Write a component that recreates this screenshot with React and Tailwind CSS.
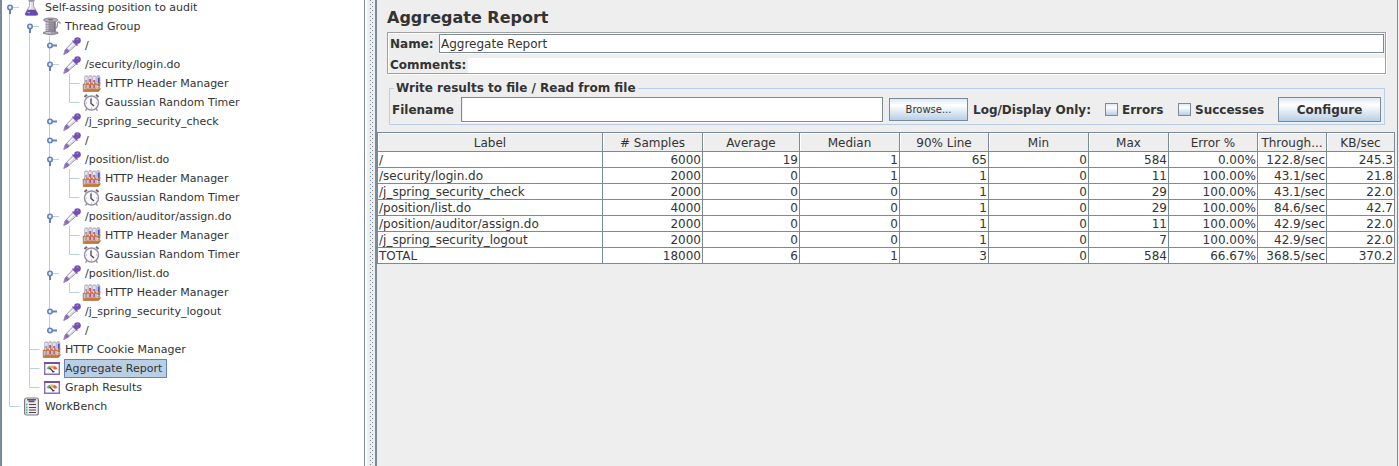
import React from "react";

function FlaskIcon() {
  return (
    <svg viewBox="0 0 20 19" className="h-[19px] w-5 shrink-0" aria-hidden="true">
      <path d="M7.500 3.500v4.500L3.300 15.500q-.6 2 1.500 2h9.400q2.100 0 1.500-2L11.500 8V3.500z" fill="#dcdbe4" stroke="#aaa5ba" />
      <path d="M5.500 11.700h8l2.300 4q.3 1.600-1.300 1.600h-10q-1.600 0-1.300-1.600z" fill="#6a49ad" />
      <path d="M6.500 2.700h6" stroke="#9894a6" strokeWidth="1.400" />
      <path d="M8.700 4v5l-1.200 2.500" stroke="#fff" fill="none" />
      <path d="M5.500 14.700h2.500" stroke="#c3b0e8" />
    </svg>
  );
}

function SpoolIcon() {
  return (
    <svg viewBox="0 0 20 19" className="h-[19px] w-5 shrink-0" aria-hidden="true">
      <path d="M13.500 11.500c3-1 1-6.500 3-6.700 1.800 0 .5 1.700 2.300 1.200" fill="none" stroke="#8f8797" strokeWidth="1.200" />
      <path d="M3.700 4.500h10v11h-10z" fill="#98919f" />
      <path d="M5.500 5v10" stroke="#c9c4ce" strokeWidth="2" />
      <path d="M12.700 5v10" stroke="#766d80" strokeWidth="1.500" />
      <path d="M3.700 7.500h10M3.700 10h10M3.700 12.500h10" stroke="#857c8e" strokeWidth=".5" />
      <ellipse cx="8.700" cy="3" rx="7.200" ry="2" fill="#b7b1bd" stroke="#837a8c" strokeWidth=".9" />
      <ellipse cx="8.700" cy="2.800" rx="2.800" ry=".7" fill="#6f6678" />
      <path d="M1.500 15.300q7.200-2.600 14.400 0v1.200q-7.200 2.600-14.400 0z" fill="#a79fae" stroke="#7b7284" strokeWidth=".8" />
      <path d="M3.500 15.800h5" stroke="#dad6de" />
    </svg>
  );
}

function DropperIcon() {
  return (
    <svg viewBox="0 0 20 19" className="h-[19px] w-5 shrink-0" aria-hidden="true">
      <path d="M11 5.500l3.500 3.300-8.800 7.700-4 2 1.300-4.500z" fill="#dddbe3" stroke="#9a92ad" strokeWidth=".9" />
      <path d="M4.800 12.300l2.900 2.700-2 1.700-4 2 1.400-4.500z" fill="#9273c9" />
      <path d="M3.800 14.300l2 1.800" stroke="#6f4fb3" />
      <path d="M11.500 7.500L6.500 12.500" stroke="#fff" strokeWidth="1.300" />
      <path d="M10.500 4.500l5 5" stroke="#7653b8" strokeWidth="1.400" />
      <circle cx="15.500" cy="4.500" r="3.300" fill="#7450b6" />
      <path d="M11.500 5.500l2.500-2.500 3 3.500-2.500 2.200z" fill="#7450b6" />
      <path d="M14.700 3.700l1.500-1" stroke="#a88bdc" strokeWidth="1.200" />
    </svg>
  );
}

function TestTubesIcon() {
  return (
    <svg viewBox="0 0 20 19" className="h-[19px] w-5 shrink-0" aria-hidden="true">
      <path d="M2.500 2.500h3.500v12H2.500zM6.500 2.500H10v12H6.500zM10.500 2.500H14v12h-3.500zM14.500 2.500H18v11h-3.500z" fill="#e3e1ea" stroke="#b3afbf" strokeWidth=".7" />
      <path d="M3.200 6h2v8h-2z" fill="#a193bd" />
      <path d="M7.200 5h2v9h-2z" fill="#d54a67" />
      <path d="M11.200 6h2v8h-2z" fill="#b2609a" />
      <path d="M15.700 3.500h2v8.500h-2z" fill="#4a55cf" />
      <path d="M3 2h2.500M7 1.700h2.500M11 2h2.500M15 1.700h2.500" stroke="#b4b1bd" />
      <path d="M2.500 8.700H19L17.200 11H.7z" fill="#cd7d3c" />
      <path d="M3.500 8v2M7.500 8v2M11.500 8v2M15 8v2" stroke="#dfd4de" strokeWidth="1.200" />
      <path d="M3 14.500h16L16.500 17.500h-16z" fill="#cd7d3c" />
      <path d="M1 17.200h15.500l2-2.500" fill="none" stroke="#a0602c" strokeWidth=".8" />
      <path d="M1.300 10v6.500M17 10.500v5" stroke="#b57040" />
    </svg>
  );
}

function ClockIcon() {
  return (
    <svg viewBox="0 0 20 19" className="h-[19px] w-5 shrink-0" aria-hidden="true">
      <path d="M2.500 4L5 1.700M14 1.700L16.500 4" stroke="#6f6b79" strokeWidth="2" />
      <path d="M5 15.500L3.500 17.700M14 15.500l1.500 2.200" stroke="#958f9f" strokeWidth="1.400" />
      <circle cx="9.500" cy="10" r="7" fill="#f9f9fb" stroke="#958ea3" strokeWidth="1.400" />
      <path d="M9.500 4.500v1M9.500 14.500v1M4 10h1M14 10h1" stroke="#aaa5b4" />
      <path d="M9 5.500v5l3 2.500" fill="none" stroke="#45434c" strokeWidth="1.300" />
    </svg>
  );
}

function GaugeIcon() {
  return (
    <svg viewBox="0 0 20 19" className="h-[19px] w-5 shrink-0" aria-hidden="true">
      <path d="M2.700 4h14.600v11.300H2.700z" fill="#fff" stroke="#8a6db9" strokeWidth="1.400" />
      <path d="M2 4h16" stroke="#7152aa" strokeWidth="2" />
      <path d="M4.500 9.500q1-2.200 3.500-2.700l1 2.500-2 1.500z" fill="#5ab573" />
      <path d="M8 6.800q2-.6 4 0l-1.500 3-1.500-.5z" fill="#f3ad58" />
      <path d="M12 6.800q2.400.6 3.500 3l-2.700 1-2-1.500z" fill="#e7653d" />
      <path d="M7.500 8.800l4 4.200" stroke="#3c3742" strokeWidth="1.200" />
      <path d="M10 12.700h2.500" stroke="#3c3742" strokeWidth="1.200" />
    </svg>
  );
}

function ClipboardIcon() {
  return (
    <svg viewBox="0 0 20 19" className="h-[19px] w-5 shrink-0" aria-hidden="true">
      <rect x="2.600" y="1" width="13.800" height="17" rx="2" fill="#eceaf0" stroke="#81788f" strokeWidth="1.200" />
      <path d="M5 2.800h9M6.500 4.500h6" stroke="#5a5663" strokeWidth="1.500" />
      <path d="M7 7.500h7M7 10.500h7M7 13h7M7 15.500h7" stroke="#4a4751" strokeWidth="1.200" />
      <path d="M4 7.500h1.500M4 10.500h1.500M4 13h1.500M4 15.500h1.500" stroke="#4fb55c" strokeWidth="1.500" />
    </svg>
  );
}

const icons = {
  flask: FlaskIcon,
  spool: SpoolIcon,
  dropper: DropperIcon,
  tubes: TestTubesIcon,
  clock: ClockIcon,
  gauge: GaugeIcon,
  clipboard: ClipboardIcon,
};

const guidePaths = {
  none: "",
  line: "M7.500 0v19",
  tee: "M7.500 0v19M7.500 9.500h10",
  elbow: "M7.500 0v9.500h10",
  openFirst: "M7.500 9v10M10 9.500h7",
  open: "M7.500 0v19M10 9.500h7",
  closed: "M7.500 0v19",
  closedLast: "M7.500 0v9",
};

function Guide({ kind }) {
  const open = kind.startsWith("open");
  const closed = kind.startsWith("closed");
  return (
    <svg viewBox="0 0 20 19" className="h-[19px] w-5 shrink-0" aria-hidden="true">
      <path d={guidePaths[kind]} fill="none" stroke="#b8cfe5" />
      {open && <path d="M8 11v5" stroke="#6382bf" strokeWidth="2" />}
      {closed && <path d="M10 9.500h5" stroke="#6382bf" strokeWidth="2" />}
      {(open || closed) && <circle cx="8" cy="9.500" r="2.200" fill="#e8f0fa" stroke="#6382bf" strokeWidth="1.600" />}
    </svg>
  );
}

const tree = [
  ["Self-assing position to audit", "flask", ["openFirst"]],
  ["Thread Group", "spool", ["line", "openFirst"]],
  ["/", "dropper", ["line", "line", "closed"]],
  ["/security/login.do", "dropper", ["line", "line", "open"]],
  ["HTTP Header Manager", "tubes", ["line", "line", "line", "tee"]],
  ["Gaussian Random Timer", "clock", ["line", "line", "line", "elbow"]],
  ["/j_spring_security_check", "dropper", ["line", "line", "closed"]],
  ["/", "dropper", ["line", "line", "closed"]],
  ["/position/list.do", "dropper", ["line", "line", "open"]],
  ["HTTP Header Manager", "tubes", ["line", "line", "line", "tee"]],
  ["Gaussian Random Timer", "clock", ["line", "line", "line", "elbow"]],
  ["/position/auditor/assign.do", "dropper", ["line", "line", "open"]],
  ["HTTP Header Manager", "tubes", ["line", "line", "line", "tee"]],
  ["Gaussian Random Timer", "clock", ["line", "line", "line", "elbow"]],
  ["/position/list.do", "dropper", ["line", "line", "open"]],
  ["HTTP Header Manager", "tubes", ["line", "line", "line", "elbow"]],
  ["/j_spring_security_logout", "dropper", ["line", "line", "closed"]],
  ["/", "dropper", ["line", "line", "closedLast"]],
  ["HTTP Cookie Manager", "tubes", ["line", "tee"]],
  ["Aggregate Report", "gauge", ["line", "tee"]],
  ["Graph Results", "gauge", ["line", "elbow"]],
  ["WorkBench", "clipboard", ["elbow"]],
];

function Tree() {
  return (
    <ul role="tree" aria-label="Test plan" className="-mt-0.5 text-[11px]">
      {tree.map(([label, icon, guides], i) => {
        const Icon = icons[icon];
        const selected = label === "Aggregate Report";
        return (
          <li key={i} role="treeitem" aria-level={guides.length} aria-selected={selected} className="flex h-[19px] items-center">
            {guides.map((kind, g) => (
              <Guide key={g} kind={kind} />
            ))}
            <Icon />
            <span
              className={
                selected
                  ? "ml-0.5 border border-[#6382bf] bg-[#b8cfe5] pr-1 leading-[17px] whitespace-nowrap"
                  : "ml-0.5 border border-transparent leading-[17px] whitespace-nowrap"
              }
            >
              {label}
            </span>
          </li>
        );
      })}
    </ul>
  );
}

const columns = [
  ["Label", "w-[225px]"],
  ["# Samples", "w-[100px]"],
  ["Average", "w-[97px]"],
  ["Median", "w-[100px]"],
  ["90% Line", "w-[89px]"],
  ["Min", "w-[100px]"],
  ["Max", "w-[80px]"],
  ["Error %", "w-[89px]"],
  ["Through...", "w-[69px]"],
  ["KB/sec", "w-[68px]"],
];

const rows = [
  ["/", "6000", "19", "1", "65", "0", "584", "0.00%", "122.8/sec", "245.3"],
  ["/security/login.do", "2000", "0", "1", "1", "0", "11", "100.00%", "43.1/sec", "21.8"],
  ["/j_spring_security_check", "2000", "0", "0", "1", "0", "29", "100.00%", "43.1/sec", "22.0"],
  ["/position/list.do", "4000", "0", "0", "1", "0", "29", "100.00%", "84.6/sec", "42.7"],
  ["/position/auditor/assign.do", "2000", "0", "0", "1", "0", "11", "100.00%", "42.9/sec", "22.0"],
  ["/j_spring_security_logout", "2000", "0", "0", "1", "0", "7", "100.00%", "42.9/sec", "22.0"],
  ["TOTAL", "18000", "6", "1", "3", "0", "584", "66.67%", "368.5/sec", "370.2"],
];

function ResultsTable() {
  return (
    <table className="w-full table-fixed border-collapse text-[12px] leading-[14px]">
      <colgroup>
        {columns.map(([name, width]) => (
          <col key={name} className={width} />
        ))}
      </colgroup>
      <thead>
        <tr>
          {columns.map(([name]) => (
            <th
              key={name}
              scope="col"
              className="h-[19px] border border-[#7a8a99] p-0 pt-0.5 font-normal whitespace-nowrap shadow-[inset_1px_1px_0_#ffffff]"
            >
              {name}
            </th>
          ))}
        </tr>
      </thead>
      <tbody className="bg-white">
        {rows.map((row) => (
          <tr key={row[0]}>
            {row.map((cell, i) => (
              <td
                key={i}
                className={
                  i === 0
                    ? "h-4 border border-[#7a8a99] p-0 pt-px pl-px whitespace-nowrap"
                    : "h-4 border border-[#7a8a99] p-0 pt-px pr-px text-right whitespace-nowrap"
                }
              >
                {cell}
              </td>
            ))}
          </tr>
        ))}
      </tbody>
    </table>
  );
}

function CheckOption({ label, className }) {
  return (
    <label className={className}>
      <input
        type="checkbox"
        className="size-[13px] shrink-0 appearance-none border border-[#7a8a99] bg-linear-to-b from-[#dde8f3] via-white via-30% to-[#b8cfe5] checked:bg-[#6382bf]"
      />
      {label}
    </label>
  );
}

export default function App() {
  return (
    <div className="flex min-h-screen bg-[#eeeeee] font-['DejaVu_Sans',sans-serif] text-[#333333]">
      <nav className="w-[365px] shrink-0 overflow-hidden border-r border-l-2 border-[#7a8a99] bg-white">
        <Tree />
      </nav>
      <div className="w-0.5 shrink-0 bg-white" />
      <div className="flex w-2 shrink-0 pl-0.5">
        <div className="w-1 bg-[conic-gradient(at_1px_1px,transparent_75%,#7a8a99_75%),conic-gradient(at_1px_1px,transparent_75%,#7a8a99_75%)] bg-size-[4px_4px] bg-position-[1px_0,3px_2px]" />
      </div>
      <main className="mr-px min-w-0 flex-1 border-r border-l-2 border-[#7a8a99]">
        <div className="pt-2 pr-[11px] pl-[10px] text-[12px] font-bold">
          <h1 className="text-[16px] leading-5">Aggregate Report</h1>
          <div className="mt-1 border border-[#a0a0a0] shadow-[1px_1px_0_#ffffff,inset_1px_1px_0_#ffffff]">
            <div className="flex items-center pt-px pr-px pl-0.5">
              <label htmlFor="name" className="w-[49px] shrink-0">
                Name:
              </label>
              <input
                id="name"
                defaultValue="Aggregate Report"
                className="h-[19px] min-w-0 flex-1 border border-[#7a8a99] bg-white px-px font-normal shadow-[0_1px_0_#ffffff] outline-none"
              />
            </div>
            <div className="mt-[5px] flex items-center pl-0.5">
              <label htmlFor="comments" className="w-[78px] shrink-0 leading-[15px]">
                Comments:
              </label>
              <input id="comments" className="h-[15px] min-w-0 flex-1 bg-white font-normal outline-none" />
            </div>
          </div>
          <fieldset className="mt-[7px] mr-px ml-0.5 min-w-0 border border-[#b8cfe5] pr-[3px] pb-0.5 pl-0.5">
            <legend className="ml-0.5 px-0.5 leading-[14px]">Write results to file / Read from file</legend>
            <div className="mt-0.5 flex items-center">
              <label htmlFor="filename" className="w-[69px] shrink-0">
                Filename
              </label>
              <input
                id="filename"
                className="h-[25px] min-w-0 flex-1 border border-[#7a8a99] bg-white px-1 font-normal shadow-[inset_1px_0_0_#eeeeee,0_1px_0_#ffffff] outline-none"
              />
              <button
                type="button"
                className="ml-1.5 h-[23px] w-[79px] shrink-0 border border-[#7a8a99] bg-linear-to-b from-[#dde8f3] via-white via-30% to-[#b8cfe5] text-[10px] font-normal"
              >
                Browse...
              </button>
              <span className="ml-[5px] w-[119px] shrink-0 whitespace-nowrap">Log/Display Only:</span>
              <div className="ml-[13px] flex shrink-0 gap-[13px]">
                <CheckOption label="Errors" className="flex w-[60px] items-center gap-1" />
                <CheckOption label="Successes" className="flex w-[91px] items-center gap-1" />
              </div>
              <button
                type="button"
                className="ml-[9px] h-[25px] w-[103px] shrink-0 border border-[#7a8a99] bg-linear-to-b from-[#dde8f3] via-white via-30% to-[#b8cfe5]"
              >
                Configure
              </button>
            </div>
          </fieldset>
        </div>
        <div className="mt-[7px] mr-0.5">
          <ResultsTable />
        </div>
      </main>
    </div>
  );
}
